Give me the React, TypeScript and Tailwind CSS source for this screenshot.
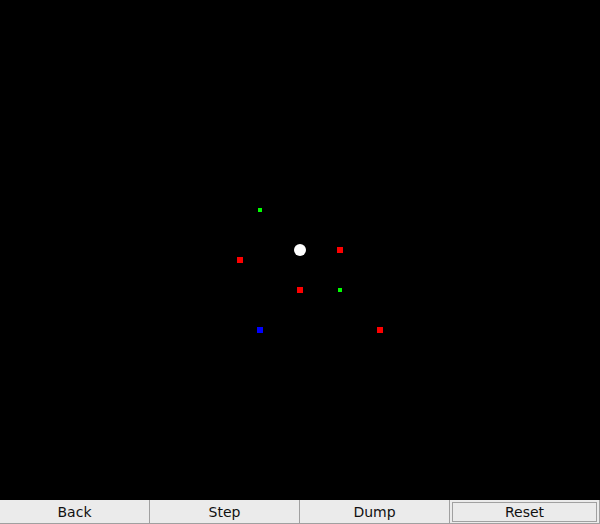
const dots = [
  { x: 300, y: 250, r: 6, color: "#ffffff" },
  { x: 340, y: 250, r: 3, color: "#ff0000" },
  { x: 240, y: 260, r: 3, color: "#ff0000" },
  { x: 300, y: 290, r: 3, color: "#ff0000" },
  { x: 380, y: 330, r: 3, color: "#ff0000" },
  { x: 260, y: 330, r: 3, color: "#0000ff" },
  { x: 260, y: 210, r: 2, color: "#00ff00" },
  { x: 340, y: 290, r: 2, color: "#00ff00" },
];

const buttons = ["Back", "Step", "Dump", "Reset"];

export default function App() {
  return (
    <div className="flex h-[524px] w-[600px] flex-col bg-black font-['DejaVu_Sans',sans-serif]">
      {/* simulation canvas */}
      <svg width="600" height="500" className="block shrink-0" shapeRendering="crispEdges">
        <rect width="600" height="500" fill="#000" />
        {dots.map((d, i) =>
          d.r >= 5 ? (
            <circle key={i} cx={d.x} cy={d.y} r={d.r} fill={d.color} shapeRendering="auto" />
          ) : (
            <rect key={i} x={d.x - d.r} y={d.y - d.r} width={d.r * 2} height={d.r * 2} fill={d.color} />
          )
        )}
      </svg>

      {/* toolbar */}
      <div className="grid h-6 grid-cols-4">
        {buttons.map((b, i) => (
          <button
            key={b}
            className="relative flex items-center justify-center border-r border-b border-[#a0a0a0] bg-[#ebebeb] pt-px text-[14px] leading-none text-[#111]"
          >
            {i === 3 && (
              <span className="pointer-events-none absolute inset-x-[2px] top-[2px] bottom-[1px] border border-[#a0a0a0]" />
            )}
            {b}
          </button>
        ))}
      </div>
    </div>
  );
}
